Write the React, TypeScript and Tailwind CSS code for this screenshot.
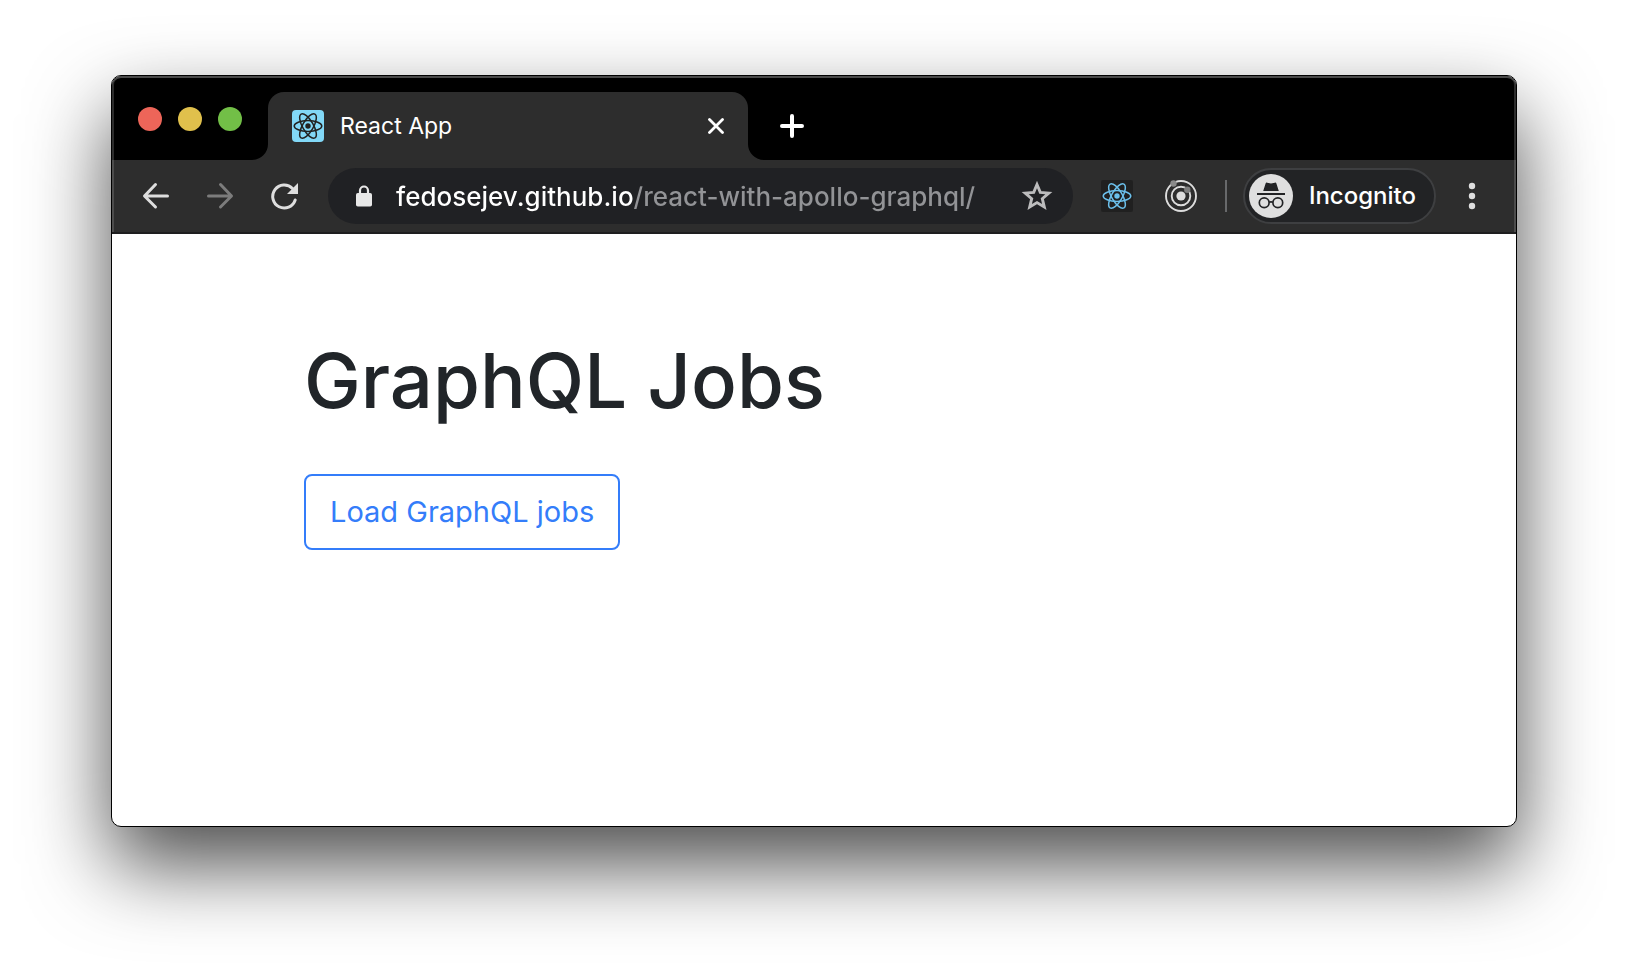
import React from "react";

type IconProps = { className?: string };

function Atom({ className }: IconProps) {
  return (
    <svg viewBox="0 0 32 32" className={className} fill="none" stroke="currentColor" strokeWidth="1.5" aria-hidden="true">
      <ellipse cx="16" cy="16" rx="13.8" ry="5.4" />
      <ellipse cx="16" cy="16" rx="13.8" ry="5.4" transform="rotate(60 16 16)" />
      <ellipse cx="16" cy="16" rx="13.8" ry="5.4" transform="rotate(120 16 16)" />
      <circle cx="16" cy="16" r="2.7" fill="currentColor" stroke="none" />
    </svg>
  );
}

function TabFlare({ className }: IconProps) {
  return (
    <svg viewBox="0 0 16 16" className={className} aria-hidden="true">
      <path d="M16 0V16H0A16 16 0 0 0 16 0Z" fill="#2d2d2d" />
    </svg>
  );
}

function IconButton({ label, children }: { label: string; children: React.ReactNode }) {
  return (
    <button type="button" aria-label={label} className="flex size-8 shrink-0 items-center justify-center">
      {children}
    </button>
  );
}

function TabStrip() {
  return (
    <div className="flex h-[84px] items-end rounded-t-[9px] bg-black pl-5 shadow-[inset_0_2px_0_#4a4a4a,inset_2px_0_0_#2c2c2c,inset_-2px_0_0_#2c2c2c]">
      <div className="flex h-[82px] items-center gap-4 pl-[6px]">
        <button type="button" aria-label="Close window" className="size-6 rounded-full bg-[#ed6559]" />
        <button type="button" aria-label="Minimize window" className="size-6 rounded-full bg-[#e0c04c]" />
        <button type="button" aria-label="Zoom window" className="size-6 rounded-full bg-[#72bf47]" />
      </div>
      <TabFlare className="ml-[10px] size-4 shrink-0" />
      <div className="flex h-[68px] w-[480px] items-center gap-4 rounded-t-2xl bg-[#2d2d2d] px-6">
        <span className="flex size-8 shrink-0 items-center justify-center rounded-sm bg-[#82d8f7] text-[#222]">
          <Atom className="size-8" />
        </span>
        <span className="flex-1 text-[23px] text-white">React App</span>
        <button type="button" aria-label="Close tab" className="flex size-4 items-center justify-center text-white">
          <svg viewBox="0 0 16 16" className="size-4" stroke="currentColor" strokeWidth="2.8" strokeLinecap="round">
            <path d="M1.5 1.5L14.5 14.5M14.5 1.5L1.5 14.5" />
          </svg>
        </button>
      </div>
      <TabFlare className="size-4 shrink-0 -scale-x-100" />
      <button type="button" aria-label="New tab" className="ml-4 flex h-[68px] w-6 items-center justify-center text-white">
        <svg viewBox="0 0 24 24" className="size-6" stroke="currentColor" strokeWidth="4" strokeLinecap="round">
          <path d="M2 12H22M12 2V22" />
        </svg>
      </button>
    </div>
  );
}

function Toolbar() {
  return (
    <div className="flex h-[74px] items-center border-b-2 border-[#1e1e1f] bg-[#2d2d2d] px-7 text-[#dedede] shadow-[inset_2px_0_0_#4c4c4c,inset_-2px_0_0_#4c4c4c]">
      <div className="flex gap-8">
        <IconButton label="Back">
          <svg viewBox="0 0 32 32" className="size-8" fill="none" stroke="currentColor" strokeWidth="3" strokeLinecap="round">
            <path d="M27.5 16H5M15.5 4.500L4.500 16L15.500 27" strokeLinejoin="round" />
          </svg>
        </IconButton>
        <IconButton label="Forward">
          <svg viewBox="0 0 32 32" className="size-8 text-[#7c7c7c]" fill="none" stroke="currentColor" strokeWidth="3" strokeLinecap="round">
            <path d="M4.500 16H27M16.500 4.500L27.500 16L16.500 27" strokeLinejoin="round" />
          </svg>
        </IconButton>
        <IconButton label="Reload">
          <svg viewBox="0 0 32 32" className="size-8" fill="none" stroke="currentColor" strokeWidth="3">
            <path d="M24.500 8.500A11.500 11.500 0 1 0 27.200 20" strokeLinecap="round" />
            <path d="M30 3V14H19Z" fill="currentColor" stroke="none" />
          </svg>
        </IconButton>
      </div>
      <div className="ml-7 flex h-14 min-w-0 flex-1 items-center rounded-full bg-[#202124] pr-5 pl-7">
        <svg viewBox="0 0 16 22" className="h-[22px] w-4 shrink-0" aria-hidden="true">
          <rect x="0" y="8" width="16" height="13.500" rx="1.800" fill="#e8e8e8" />
          <path d="M4 9V5.500A4 4 0 0 1 12 5.500V9" fill="none" stroke="#e8e8e8" strokeWidth="2.200" />
        </svg>
        <input
          type="text"
          aria-label="Address"
          defaultValue="fedosejev.github.io/react-with-apollo-graphql/"
          className="mx-6 h-10 min-w-0 flex-1 bg-[linear-gradient(to_right,#fff_238px,#929396_238px)] bg-clip-text text-[26px] font-medium text-transparent outline-none"
        />
        <IconButton label="Bookmark this page">
          <svg viewBox="0 0 32 32" className="size-8" fill="none" stroke="#bcbcbd" strokeWidth="2.900">
            <path d="M16 4.500L19.300 12.400L27.800 13.100L21.300 18.700L23.300 27L16 22.600L8.700 27L10.700 18.700L4.200 13.100L12.700 12.400Z" />
          </svg>
        </IconButton>
      </div>
      <div className="ml-7 flex items-center gap-8">
        <button type="button" aria-label="React Developer Tools" className="size-8 rounded-xs bg-[#202020] text-[#6bbfea]">
          <Atom className="size-8" />
        </button>
        <IconButton label="Apollo Client Developer Tools">
          <svg viewBox="0 0 32 32" className="size-8" fill="none" stroke="#dcdcdc" strokeWidth="1.900">
            <circle cx="16" cy="16" r="15" />
            <circle cx="16" cy="16" r="9.300" />
            <circle cx="16" cy="16" r="4.600" fill="#dcdcdc" stroke="none" />
            <circle cx="8.500" cy="3.500" r="3.200" fill="#8a8a8a" stroke="none" />
            <circle cx="22.300" cy="9.700" r="3.200" fill="#7e7e7e" stroke="none" />
          </svg>
        </IconButton>
      </div>
      <div className="mr-4 ml-7 h-8 w-0.5 bg-[#68696b]" />
      <button type="button" className="flex h-14 items-center gap-4 rounded-full border-2 border-[#3e3f41] bg-[#222325] pr-[18px] pl-1 text-[24px] font-medium text-white">
        <svg viewBox="0 0 44 44" className="size-11 shrink-0" aria-hidden="true">
          <circle cx="22" cy="22" r="22" fill="#dfdfdf" />
          <path d="M14.200 17L16.600 9.400Q17 8.300 18.200 8.700L22 9.400L25.800 8.700Q27 8.300 27.400 9.400L29.800 17Z" fill="#222325" />
          <path d="M8 20H36" stroke="#222325" strokeWidth="2" />
          <g fill="none" stroke="#222325" strokeWidth="1.700">
            <circle cx="15.200" cy="28.800" r="4.900" />
            <circle cx="28.800" cy="28.800" r="4.900" />
            <path d="M20 28.300Q22 27.300 24 28.300" />
          </g>
        </svg>
        Incognito
      </button>
      <button type="button" aria-label="Menu" className="ml-5 flex size-8 items-center justify-center">
        <svg viewBox="0 0 32 32" className="size-8" fill="currentColor">
          <circle cx="16" cy="6" r="3.200" />
          <circle cx="16" cy="16" r="3.200" />
          <circle cx="16" cy="26" r="3.200" />
        </svg>
      </button>
    </div>
  );
}

export default function App() {
  return (
    <div className="min-h-screen bg-white px-[111px] pt-[75px] pb-[147px] font-['Inter','Liberation_Sans',sans-serif]">
      <div className="overflow-hidden rounded-[10px] border border-black bg-white shadow-[0_38px_82px_rgba(0,0,0,0.7)]">
        <TabStrip />
        <Toolbar />
        <main className="mx-auto min-h-[592px] max-w-[1080px] px-[30px] pt-[98px]">
          <h1 className="text-[76px] leading-[96px] font-medium text-[#212529]">GraphQL Jobs</h1>
          <button
            type="button"
            className="mt-[46px] rounded-lg border-2 border-[#347dfa] px-6 py-3 text-[29px] leading-[48px] text-[#347dfa]"
          >
            Load GraphQL jobs
          </button>
        </main>
      </div>
    </div>
  );
}
